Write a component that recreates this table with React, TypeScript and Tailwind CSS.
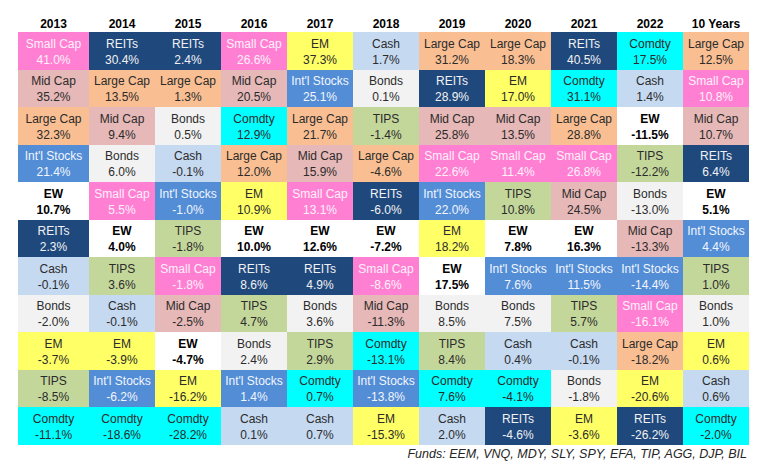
import React from 'react';

type Cell = [string, string];

const YEARS = ['2013', '2014', '2015', '2016', '2017', '2018', '2019', '2020', '2021', '2022', '10 Years'];

// each column is ranked top to bottom
const COLS: Cell[][] = [
  [['Small Cap', '41.0%'], ['Mid Cap', '35.2%'], ['Large Cap', '32.3%'], ["Int'l Stocks", '21.4%'], ['EW', '10.7%'], ['REITs', '2.3%'], ['Cash', '-0.1%'], ['Bonds', '-2.0%'], ['EM', '-3.7%'], ['TIPS', '-8.5%'], ['Comdty', '-11.1%']],
  [['REITs', '30.4%'], ['Large Cap', '13.5%'], ['Mid Cap', '9.4%'], ['Bonds', '6.0%'], ['Small Cap', '5.5%'], ['EW', '4.0%'], ['TIPS', '3.6%'], ['Cash', '-0.1%'], ['EM', '-3.9%'], ["Int'l Stocks", '-6.2%'], ['Comdty', '-18.6%']],
  [['REITs', '2.4%'], ['Large Cap', '1.3%'], ['Bonds', '0.5%'], ['Cash', '-0.1%'], ["Int'l Stocks", '-1.0%'], ['TIPS', '-1.8%'], ['Small Cap', '-1.8%'], ['Mid Cap', '-2.5%'], ['EW', '-4.7%'], ['EM', '-16.2%'], ['Comdty', '-28.2%']],
  [['Small Cap', '26.6%'], ['Mid Cap', '20.5%'], ['Comdty', '12.9%'], ['Large Cap', '12.0%'], ['EM', '10.9%'], ['EW', '10.0%'], ['REITs', '8.6%'], ['TIPS', '4.7%'], ['Bonds', '2.4%'], ["Int'l Stocks", '1.4%'], ['Cash', '0.1%']],
  [['EM', '37.3%'], ["Int'l Stocks", '25.1%'], ['Large Cap', '21.7%'], ['Mid Cap', '15.9%'], ['Small Cap', '13.1%'], ['EW', '12.6%'], ['REITs', '4.9%'], ['Bonds', '3.6%'], ['TIPS', '2.9%'], ['Comdty', '0.7%'], ['Cash', '0.7%']],
  [['Cash', '1.7%'], ['Bonds', '0.1%'], ['TIPS', '-1.4%'], ['Large Cap', '-4.6%'], ['REITs', '-6.0%'], ['EW', '-7.2%'], ['Small Cap', '-8.6%'], ['Mid Cap', '-11.3%'], ['Comdty', '-13.1%'], ["Int'l Stocks", '-13.8%'], ['EM', '-15.3%']],
  [['Large Cap', '31.2%'], ['REITs', '28.9%'], ['Mid Cap', '25.8%'], ['Small Cap', '22.6%'], ["Int'l Stocks", '22.0%'], ['EM', '18.2%'], ['EW', '17.5%'], ['Bonds', '8.5%'], ['TIPS', '8.4%'], ['Comdty', '7.6%'], ['Cash', '2.0%']],
  [['Large Cap', '18.3%'], ['EM', '17.0%'], ['Mid Cap', '13.5%'], ['Small Cap', '11.4%'], ['TIPS', '10.8%'], ['EW', '7.8%'], ["Int'l Stocks", '7.6%'], ['Bonds', '7.5%'], ['Cash', '0.4%'], ['Comdty', '-4.1%'], ['REITs', '-4.6%']],
  [['REITs', '40.5%'], ['Comdty', '31.1%'], ['Large Cap', '28.8%'], ['Small Cap', '26.8%'], ['Mid Cap', '24.5%'], ['EW', '16.3%'], ["Int'l Stocks", '11.5%'], ['TIPS', '5.7%'], ['Cash', '-0.1%'], ['Bonds', '-1.8%'], ['EM', '-3.6%']],
  [['Comdty', '17.5%'], ['Cash', '1.4%'], ['EW', '-11.5%'], ['TIPS', '-12.2%'], ['Bonds', '-13.0%'], ['Mid Cap', '-13.3%'], ["Int'l Stocks", '-14.4%'], ['Small Cap', '-16.1%'], ['Large Cap', '-18.2%'], ['EM', '-20.6%'], ['REITs', '-26.2%']],
  [['Large Cap', '12.5%'], ['Small Cap', '10.8%'], ['Mid Cap', '10.7%'], ['REITs', '6.4%'], ['EW', '5.1%'], ["Int'l Stocks", '4.4%'], ['TIPS', '1.0%'], ['Bonds', '1.0%'], ['EM', '0.6%'], ['Cash', '0.6%'], ['Comdty', '-2.0%']],
];

const STYLE: Record<string, string> = {
  'Small Cap': 'bg-[#ff80d3] text-[#fff0fa]',
  'Mid Cap': 'bg-[#e6b8b7] text-[#2b2b2b]',
  'Large Cap': 'bg-[#f9bf92] text-[#2b2b2b]',
  "Int'l Stocks": 'bg-[#538dd5] text-[#f2f6ff]',
  REITs: 'bg-[#1f497d] text-[#f2f2f2]',
  Bonds: 'bg-[#f2f2f2] text-[#2b2b2b]',
  Cash: 'bg-[#c5d9f1] text-[#2b2b2b]',
  Comdty: 'bg-[#00ffff] text-[#2b2b2b]',
  TIPS: 'bg-[#c4d79b] text-[#2b2b2b]',
  EM: 'bg-[#ffff66] text-[#2b2b2b]',
  EW: 'bg-white text-black font-bold',
};

export default function App() {
  return (
    <div className="w-[764px] h-[470px] bg-white pt-[14px] pl-[18px] font-['Liberation_Sans',Arial,sans-serif] text-[12px] leading-[16px]">
      <div className="grid grid-cols-[71px_repeat(10,66px)] w-[731px]">
        {YEARS.map(y => (
          <div key={y} className="h-[18px] flex items-end justify-center font-bold text-black">{y}</div>
        ))}
      </div>
      <div className="grid grid-cols-[71px_repeat(10,66px)] w-[731px]">
        {COLS.map((col, ci) => (
          <div key={ci} className="flex flex-col">
            {col.map(([name, val], ri) => (
              <div key={ri} className={`h-[37.5px] flex flex-col items-center justify-center pt-[2px] ${STYLE[name]}`}>
                <span>{name}</span>
                <span>{val}</span>
              </div>
            ))}
          </div>
        ))}
      </div>
      <div className="w-[729px] pt-[1px] text-right italic text-[12.5px] text-[#262626]">Funds: EEM, VNQ, MDY, SLY, SPY, EFA, TIP, AGG, DJP, BIL</div>
    </div>
  );
}
